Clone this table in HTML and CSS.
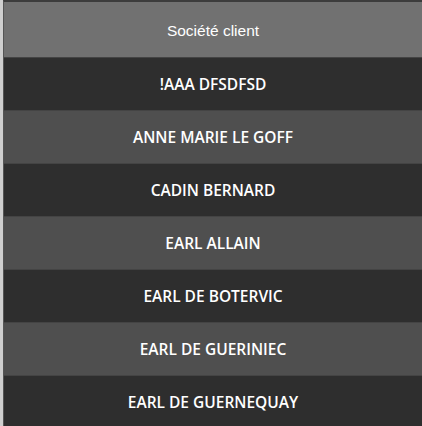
FILE: index.html
```html
<!DOCTYPE html>
<html lang="fr">
<head>
<meta charset="utf-8">
<title>Société client</title>
<link rel="stylesheet" href="styles.css">
</head>
<body>
<div class="frame">
  <div class="table">
    <div class="head">Société client</div>
    <div class="row dark">!AAA DFSDFSD</div>
    <div class="row light">ANNE MARIE LE GOFF</div>
    <div class="row dark">CADIN BERNARD</div>
    <div class="row light">EARL ALLAIN</div>
    <div class="row dark">EARL DE BOTERVIC</div>
    <div class="row light">EARL DE GUERINIEC</div>
    <div class="row dark">EARL DE GUERNEQUAY</div>
  </div>
</div>
</body>
</html>
```
FILE: styles.css
```css
html, body {
  margin: 0;
  padding: 0;
  background: #2e2e2e;
}
.frame {
  width: 422px;
  height: 426px;
  overflow: hidden;
  box-sizing: border-box;
  border-left: 3px solid #cfcfcf;
  background: #2e2e2e;
}
.table {
  border-left: 1px solid #555555;
  border-top: 2px solid #3c3c3c;
  display: flex;
  flex-direction: column;
}
.head {
  height: 55px;
  box-sizing: border-box;
  padding-top: 3px;
  display: flex;
  align-items: center;
  justify-content: center;
  background: #717171;
  color: #ffffff;
  font-family: "Liberation Sans", Arial, sans-serif;
  font-size: 15.5px;
}
.row {
  height: 51px;
  padding-top: 1px;
  border-top: 1px solid #444444;
  display: flex;
  align-items: center;
  justify-content: center;
  color: #ffffff;
  font-family: "Open Sans", "Noto Sans", sans-serif;
  font-weight: 600;
  font-size: 15.5px;
  line-height: 1;
}
.dark { background: #2e2e2e; }
.light { background: #4f4f4f; }
```
